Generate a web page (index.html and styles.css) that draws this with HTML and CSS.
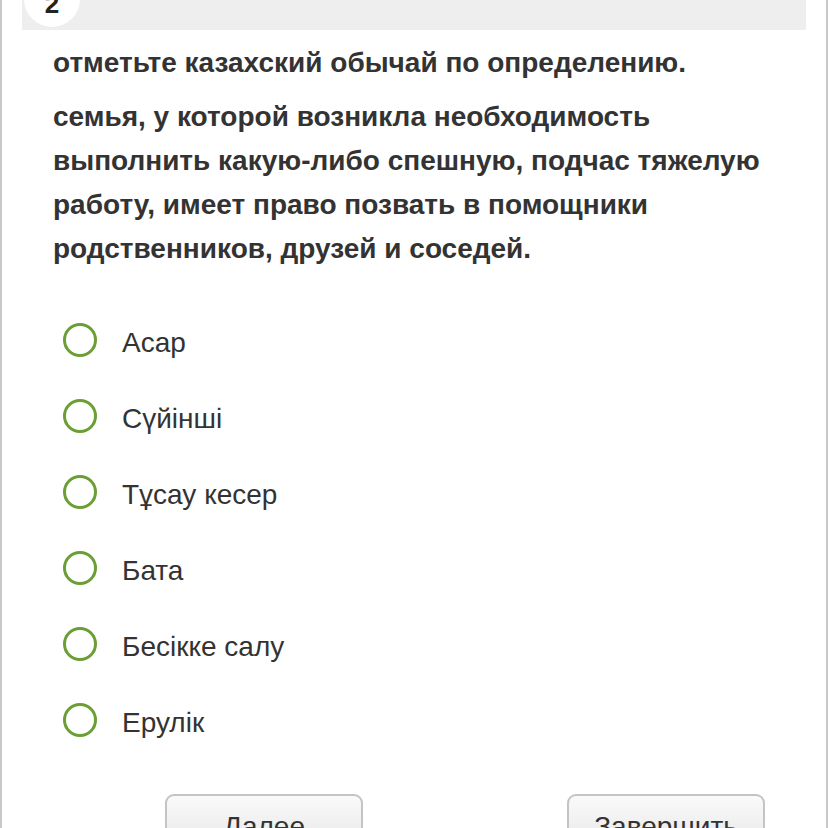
FILE: index.html
```html
<!DOCTYPE html>
<html lang="ru">
<head>
<meta charset="utf-8">
<link rel="stylesheet" href="styles.css">
</head>
<body>
<div class="frame">
  <div class="head">
    <div class="num">2</div>
  </div>
  <div class="question">
    <p class="title">отметьте казахский обычай по определению.</p>
    <p class="text">семья, у которой возникла необходимость выполнить какую-либо спешную, подчас тяжелую работу, имеет право позвать в помощники родственников, друзей и соседей.</p>
  </div>
  <ul class="options">
    <li class="opt"><span class="radio"></span><span class="label">Асар</span></li>
    <li class="opt"><span class="radio"></span><span class="label">Сүйінші</span></li>
    <li class="opt"><span class="radio"></span><span class="label">Тұсау кесер</span></li>
    <li class="opt"><span class="radio"></span><span class="label">Бата</span></li>
    <li class="opt"><span class="radio"></span><span class="label">Бесікке салу</span></li>
    <li class="opt"><span class="radio"></span><span class="label">Ерулік</span></li>
  </ul>
  <div class="buttons">
    <button class="btn">Далее</button>
    <button class="btn">Завершить</button>
  </div>
</div>
</body>
</html>
```
FILE: styles.css
```css
html, body {
  margin: 0;
  padding: 0;
  background: #ffffff;
  overflow: hidden;
}
body {
  font-family: "Liberation Sans", Arial, sans-serif;
  color: #333333;
}
.frame {
  width: 824px;
  height: 900px;
  border-left: 2px solid #c8c8c8;
  border-right: 2px solid #c8c8c8;
  background: #ffffff;
}
.head {
  margin: 0 20px;
  height: 30px;
  background: #eeeeee;
  position: relative;
}
.num {
  position: absolute;
  left: 2px;
  top: -29px;
  width: 56px;
  height: 56px;
  border-radius: 50%;
  background: #ffffff;
  font-weight: bold;
  font-size: 26px;
  color: #222;
  text-align: center;
  line-height: 66px;
}
.question {
  padding: 11px 0 0 51px;
}
.question p {
  margin: 0;
  font-weight: bold;
  font-size: 28px;
  line-height: 44px;
  color: #333333;
}
.title {
  margin-bottom: 10px !important;
}
.text {
  width: 720px;
}
.options {
  list-style: none;
  margin: 31px 0 0 0;
  padding: 0 0 0 61px;
}
.opt {
  display: flex;
  align-items: center;
  height: 76px;
}
.radio {
  width: 28px;
  height: 28px;
  border: 3.5px solid #6b9e35;
  border-radius: 50%;
  flex: none;
}
.label {
  margin-left: 25px;
  padding-top: 6px;
  font-size: 28px;
  color: #333333;
}
.buttons {
  display: flex;
  justify-content: space-between;
  padding: 36px 61px 0 163px;
}
.btn {
  width: 198px;
  height: 60px;
  border: 2px solid #c4c4c4;
  border-radius: 9px;
  background: linear-gradient(#fafafa, #e6e6e6);
  font-family: "Liberation Sans", Arial, sans-serif;
  font-size: 28px;
  color: #333333;
  padding: 6px 0 0 0;
  line-height: 32px;
}
```
